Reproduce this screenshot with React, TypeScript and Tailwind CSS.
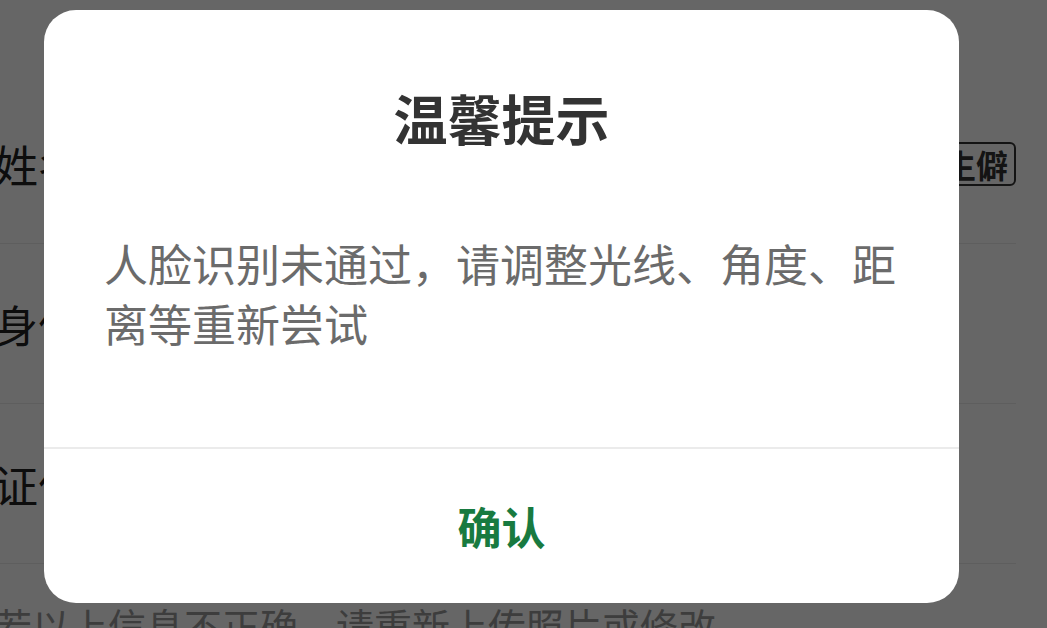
const FONT = "font-['Noto_Sans_CJK_SC','Noto_Sans',sans-serif]";

const rows = [
  { label: "姓名", action: "生僻" },
  { label: "身份证号" },
  { label: "证件有效期" },
];

function FormBehind() {
  return (
    <div className="-ml-[6px] mr-[31px] pt-[84px]">
      {rows.map((row) => (
        <div
          key={row.label}
          className="flex h-[160px] items-center justify-between border-b border-[#ebebeb]"
        >
          <span className="whitespace-nowrap text-[44px] leading-[44px] text-[#222]">
            {row.label}
          </span>
          {row.action && (
            <span className="flex h-[44px] items-center rounded-[6px] border-2 border-[#333] px-[6px] text-[32px] font-bold leading-none text-[#333]">
              {row.action}
            </span>
          )}
        </div>
      ))}
      <p className="whitespace-nowrap pt-[42px] text-[38px] leading-[38px] text-[#999]">
        若以上信息不正确，请重新上传照片或修改
      </p>
    </div>
  );
}

function Dialog() {
  return (
    <div className="flex h-[593px] w-[915px] flex-col rounded-[32px] bg-white">
      <h2 className="pt-[81px] text-center text-[54px] font-bold leading-[54px] text-[#333]">
        温馨提示
      </h2>
      <p className="mt-[88px] px-[60px] text-[44px] leading-[60px] text-[#6b6b6b]">
        人脸识别未通过，请调整光线、角度、距离等重新尝试
      </p>
      <div className="flex-1" />
      <div className="h-[2px] bg-[#ebebeb]" />
      <button
        type="button"
        className="flex h-[154px] items-center justify-center text-[44px] font-bold text-[#187a40]"
      >
        确认
      </button>
    </div>
  );
}

export default function App() {
  return (
    <div className={`relative h-[628px] w-[1047px] overflow-hidden bg-white ${FONT}`}>
      <FormBehind />
      {/* Mask + dialog */}
      <div className="absolute inset-0 bg-black/60 pl-[44px] pt-[10px]">
        <Dialog />
      </div>
    </div>
  );
}
